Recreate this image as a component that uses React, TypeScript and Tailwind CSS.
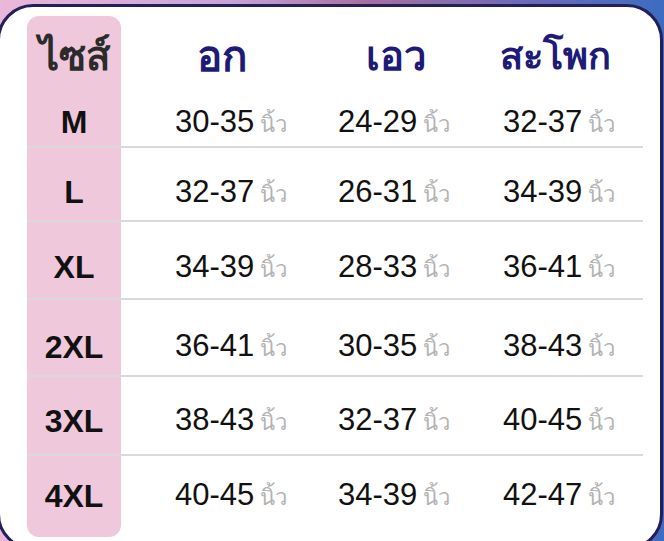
const rows = [
  { size: "M", h: "h-[52px]", off: "pt-[2px]", cols: ["30-35", "24-29", "32-37"] },
  { size: "L", h: "h-[74px]", off: "pt-[16px]", cols: ["32-37", "26-31", "34-39"] },
  { size: "XL", h: "h-[78px]", off: "pt-[14px]", cols: ["34-39", "28-33", "36-41"] },
  { size: "2XL", h: "h-[77px]", off: "pt-[18px]", cols: ["36-41", "30-35", "38-43"] },
  { size: "3XL", h: "h-[79px]", off: "pt-[10px]", cols: ["38-43", "32-37", "40-45"] },
  { size: "4XL", h: "h-[81px]", off: "pb-[2px]", cols: ["40-45", "34-39", "42-47"] },
];

const sans = "font-['Liberation_Sans','Noto_Sans',sans-serif]";

export default function App() {
  return (
    <div className="h-[541px] w-[664px] overflow-hidden bg-[linear-gradient(90deg,#eab8d8_0%,#c7a2d8_35%,#a8709f_55%,#6a6ab8_80%,#3d6cc0_100%)]">
      <div className="ml-[-3px] mt-[4px] h-[546px] w-[666px] rounded-[36px] border-[3px] border-[#231f5c] bg-white pl-[27px] pt-[9px]">
        <div className={`w-[616px] ${sans}`}>
          {/* header */}
          <div className="flex h-[80px] items-center">
            <div className="flex h-full w-[94px] items-center justify-center rounded-t-[12px] bg-[#f0c8dc] text-[40px] font-bold text-[#2b2b2b]">
              ไซส์
            </div>
            <div className="w-[202px] text-center text-[42px] font-bold text-[#1e1a78]">อก</div>
            <div className="w-[146px] text-center text-[40px] font-bold text-[#1e1a78]">เอว</div>
            <div className="w-[172px] text-center text-[38px] font-bold text-[#1e1a78]">สะโพก</div>
          </div>

          {rows.map((row, i) => (
            <div
              key={row.size}
              className={`flex ${row.h} ${i < rows.length - 1 ? "border-b-2 border-black/15" : ""}`}
            >
              <div
                className={`flex w-[94px] items-center justify-center bg-[#f0c8dc] ${row.off} text-[32px] font-bold text-[#111] ${
                  i === rows.length - 1 ? "rounded-b-[12px]" : ""
                }`}
              >
                {row.size}
              </div>
              {row.cols.map((c, j) => (
                <div
                  key={j}
                  className={`flex w-[164px] items-center whitespace-nowrap ${row.off} ${j === 1 ? "pl-[53px]" : "pl-[54px]"}`}
                >
                  <div className="flex items-baseline">
                    <span className="text-[31px] text-[#111]">{c}</span>
                    <span className="ml-[6px] text-[22px] font-light text-[#b3b3b3]">นิ้ว</span>
                  </div>
                </div>
              ))}
            </div>
          ))}
        </div>
      </div>
    </div>
  );
}
